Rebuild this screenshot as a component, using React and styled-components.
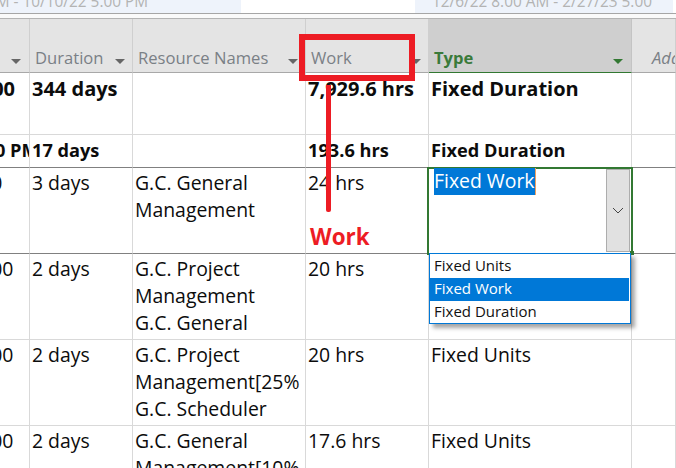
import React from "react";
import styled, { createGlobalStyle } from "styled-components";

const Global = createGlobalStyle`
  html, body { margin: 0; padding: 0; background: #fff; }
  body { width: 676px; height: 468px; overflow: hidden; font-family: "Open Sans", "Noto Sans", "Liberation Sans", sans-serif; }
`;
const Page = styled.div`position: relative; width: 676px; height: 468px; overflow: hidden; background: #fff;`;
const Timeline = styled.div`display: flex; height: 13px; overflow: hidden; border-bottom: 1px solid #a6a6a6;`;
const Span = styled.div`
  width: ${p => p.$w}px; flex: none; height: 13px; overflow: hidden; box-sizing: border-box;
  background: ${p => p.$fill ? "#eef3fb" : "#fff"}; padding-left: ${p => p.$pad || 0}px;
  color: #b3b3b3; font-size: 15.4px; line-height: 14px; white-space: nowrap;
`;
const SpanText = styled.div`margin-top: -5px; margin-left: ${p => p.$ml || 0}px;`;
const Gap = styled.div`height: 4px; background: #fafafa; border-bottom: 1px solid #b4b4b4;`;
const Grid = styled.div`display: grid; grid-template-columns: 30px 103px 173px 123px 203px 44px;`;
const Head = styled.div`
  position: relative; height: 54px; box-sizing: border-box; display: flex; align-items: flex-end;
  padding: 0 0 3px ${p => p.$pad ?? 5}px;
  border-right: 1px solid ${p => p.$active ? "#c4c4c4" : "#cfcfcf"};
  border-bottom: ${p => p.$active ? "1px solid #327832" : "1px solid #a8a8a8"};
  background: ${p => p.$active ? "#cfcfcf" : "#e4e4e4"};
  color: ${p => p.$active ? "#3a7a3a" : "#7a8086"};
  font-size: 16.6px; line-height: 22px; font-weight: ${p => p.$active ? 700 : 400};
  font-style: ${p => p.$italic ? "italic" : "normal"}; white-space: nowrap; overflow: hidden;
`;
const Arrow = styled.span`
  position: absolute; right: ${p => p.$r ?? 4}px; bottom: 8px; width: 0; height: 0;
  border-left: 5.5px solid transparent; border-right: 5.5px solid transparent;
  border-top: 5px solid ${p => p.$c || "#666"};
`;
const Cell = styled.div`
  height: ${p => p.$h}px; box-sizing: border-box; overflow: hidden;
  padding: ${p => p.$top ?? 0}px 0 0 ${p => p.$pad ?? 2}px;
  border-right: 1px solid #d9d9d9;
  border-bottom: 1px solid ${p => p.$dark ? "#808080" : "#d9d9d9"};
  font-size: ${p => p.$size}px; line-height: 27px;
  font-weight: ${p => p.$bold ? 700 : 400}; color: #0c0c0c; white-space: nowrap;
`;
const Clip = styled.div`margin-left: ${p => p.$ml}px; white-space: nowrap;`;
const Line = styled.div`white-space: nowrap;`;

const Callout = styled.div`position: absolute; left: 299px; top: 34px; width: 116px; height: 47px; box-sizing: border-box; border: 6px solid #ed1c24;`;
const Pointer = styled.div`position: absolute; left: 326px; top: 85px; width: 5px; height: 127px; background: #ed1c24; border-radius: 0 0 2px 2px;`;
const Label = styled.div`position: absolute; left: 310px; top: 222px; color: #ed1c24; font-weight: 700; font-size: 22.4px; line-height: 30px;`;
const Editor = styled.div`position: absolute; left: 427px; top: 167px; width: 206px; height: 88px; box-sizing: border-box; border: 2px solid #327832; background: #fff;`;
const Selected = styled.span`position: absolute; left: 5px; top: -1px; height: 27px; line-height: 26px; font-size: 19.4px; background: #0078d7; color: #fff; white-space: nowrap; border-right: 1px solid #f0a060;`;
const DropButton = styled.div`position: absolute; right: 1px; top: 0; width: 24px; height: 83px; box-sizing: border-box; border: 1px solid #adadad; background: #e1e1e1; display: flex; align-items: center; justify-content: center;`;
const Handle = styled.div`position: absolute; left: 630px; top: 251px; width: 4px; height: 4px; background: #327832;`;
const Menu = styled.div`position: absolute; left: 429px; top: 253px; width: 202px; height: 71px; box-sizing: border-box; border: 1px solid #0078d7; background: #fff; box-shadow: 4px 4px 4px rgba(0,0,0,.35); padding-top: 1px;`;
const Item = styled.div`
  height: 23px; line-height: 21px; padding-left: 4px; margin-right: 1px; font-size: 15px; white-space: nowrap;
  background: ${p => p.$on ? "#0078d7" : "transparent"}; color: ${p => p.$on ? "#fff" : "#111"};
`;

const rows = [
  { h: 62, bold: true, size: 20, top: 2, ml: -25, left: "8:00", dur: "344 days", res: [], work: "7,929.6 hrs", type: "Fixed Duration" },
  { h: 33, bold: true, size: 18.2, top: 2, ml: -31, left: "8:00 PM", dur: "17 days", res: [], work: "193.6 hrs", type: "Fixed Duration", dark: true },
  { h: 86, size: 19.4, top: 1, ml: -36, left: "8:00", dur: "3 days", res: ["G.C. General", "Management"], work: "24 hrs", type: "", dark: true },
  { h: 86, size: 19.4, top: 1, ml: -25, left: "8:00", dur: "2 days", res: ["G.C. Project", "Management", "G.C. General"], work: "20 hrs", type: "" },
  { h: 86, size: 19.4, top: 1, ml: -25, left: "8:00", dur: "2 days", res: ["G.C. Project", "Management[25%", "G.C. Scheduler"], work: "20 hrs", type: "Fixed Units" },
  { h: 86, size: 19.4, top: 1, ml: -25, left: "8:00", dur: "2 days", res: ["G.C. General", "Management[10%"], work: "17.6 hrs", type: "Fixed Units" },
];

export default function App() {
  return (
    <Page>
      <Global />
      <Timeline>
        <Span $w={241} $fill><SpanText $ml={-14}>AM - 10/10/22 5:00 PM</SpanText></Span>
        <Span $w={174} />
        <Span $w={258} $fill $pad={17}><SpanText>12/6/22 8:00 AM - 2/27/23 5:00</SpanText></Span>
      </Timeline>
      <Gap />
      <Grid>
        <Head $pad={0}><Arrow $r={8} /></Head>
        <Head>Duration<Arrow $r={7} /></Head>
        <Head>Resource Names<Arrow $r={7} /></Head>
        <Head>Work<Arrow $r={7} /></Head>
        <Head $active>Type<Arrow $r={8} $c="#327832" /></Head>
        <Head $italic $pad={20}>Add New Column</Head>
        {rows.map((r, i) => (
          <React.Fragment key={i}>
            <Cell $h={r.h} $size={r.size} $dark={r.dark} $bold={r.bold} $top={r.top} $pad={0}><Clip $ml={r.ml}>{r.left}</Clip></Cell>
            <Cell $h={r.h} $size={r.size} $dark={r.dark} $bold={r.bold} $top={r.top}>{r.dur}</Cell>
            <Cell $h={r.h} $size={r.size} $dark={r.dark} $top={r.top}>{r.res.map(t => <Line key={t}>{t}</Line>)}</Cell>
            <Cell $h={r.h} $size={r.size} $dark={r.dark} $bold={r.bold} $top={r.top}>{r.work}</Cell>
            <Cell $h={r.h} $size={r.size} $dark={r.dark} $bold={r.bold} $top={r.top}>{r.type}</Cell>
            <Cell $h={r.h} $size={r.size} $dark={r.dark} />
          </React.Fragment>
        ))}
      </Grid>
      <Editor>
        <Selected>Fixed Work</Selected>
        <DropButton>
          <svg width="12" height="7" viewBox="0 0 12 7"><path d="M1 1l5 5 5-5" fill="none" stroke="#444" strokeWidth="1" /></svg>
        </DropButton>
      </Editor>
      <Handle />
      <Menu>
        <Item>Fixed Units</Item>
        <Item $on>Fixed Work</Item>
        <Item>Fixed Duration</Item>
      </Menu>
      <Callout />
      <Pointer />
      <Label>Work</Label>
    </Page>
  );
}
